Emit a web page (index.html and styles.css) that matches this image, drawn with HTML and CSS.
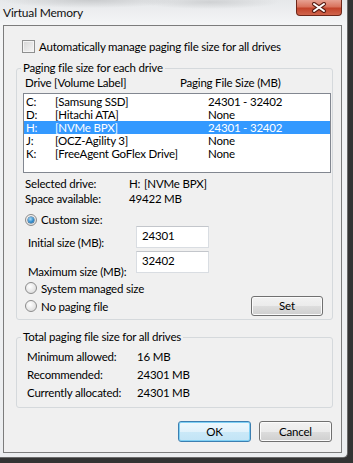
FILE: index.html
```html
<html>
<head>
<link rel="stylesheet" href="styles.css">
</head>
<body>
<div class="window">
  <div class="titlebar">
    <span class="title">Virtual Memory</span>
    <div class="close">
      <svg width="16" height="11" viewBox="0 0 16 11">
        <path d="M3 2 L13 9 M13 2 L3 9" stroke="#5a1e14" stroke-width="4" stroke-linecap="round"/>
        <path d="M3 2 L13 9 M13 2 L3 9" stroke="#ffffff" stroke-width="2" stroke-linecap="round"/>
      </svg>
    </div>
  </div>

  <div class="client">
    <div class="check-row"><span class="checkbox"></span>Automatically manage paging file size for all drives</div>

    <fieldset class="group group-drives">
      <legend>Paging file size for each drive</legend>
      <div class="list-head">
        <span class="h-drive">Drive</span>
        <span class="h-label">[Volume Label]</span>
        <span>Paging File Size (MB)</span>
      </div>
      <div class="listbox">
        <div class="row"><span class="r-drive">C:</span><span class="r-label">[Samsung SSD]</span><span>24301 - 32402</span></div>
        <div class="row"><span class="r-drive">D:</span><span class="r-label">[Hitachi ATA]</span><span>None</span></div>
        <div class="row sel"><span class="r-drive">H:</span><span class="r-label">[NVMe BPX]</span><span>24301 - 32402</span></div>
        <div class="row"><span class="r-drive">J:</span><span class="r-label">[OCZ-Agility 3]</span><span>None</span></div>
        <div class="row"><span class="r-drive">K:</span><span class="r-label">[FreeAgent GoFlex Drive]</span><span>None</span></div>
      </div>

      <div class="info first"><span class="info-key">Selected drive:</span><span class="drv">H:</span><span>[NVMe BPX]</span></div>
      <div class="info"><span class="info-key">Space available:</span><span>49422 MB</span></div>

      <div class="radio-row custom"><span class="radio on"><span class="dot"></span></span>Custom size:</div>
      <div class="size-row initial">
        <span class="size-label">Initial size (MB):</span>
        <div class="size-input">24301</div>
      </div>
      <div class="size-row maximum">
        <span class="size-label">Maximum size (MB):</span>
        <div class="size-input">32402</div>
      </div>
      <div class="radio-row system"><span class="radio"></span>System managed size</div>
      <div class="radio-row nopaging">
        <span class="radio-label"><span class="radio"></span>No paging file</span>
        <div class="btn set">Set</div>
      </div>
    </fieldset>

    <fieldset class="group group-total">
      <legend>Total paging file size for all drives</legend>
      <div class="total"><span class="total-key">Minimum allowed:</span><span>16 MB</span></div>
      <div class="total"><span class="total-key">Recommended:</span><span>24301 MB</span></div>
      <div class="total"><span class="total-key">Currently allocated:</span><span>24301 MB</span></div>
    </fieldset>

    <div class="buttons">
      <div class="btn default">OK</div>
      <div class="btn">Cancel</div>
    </div>
  </div>
</div>
</body>
</html>
```

FILE: styles.css
```css
body
{
  margin:0;
  padding:0;
  background:#333333;
  font-family:"Lato", "Liberation Sans", sans-serif;
  font-size:11.5px;
  letter-spacing:-0.2px;
  color:#000;
  overflow:hidden;
}
.window
{
  width:348px;
  height:458px;
  box-sizing:border-box;
  padding:0 5px 0 3px;
  background:
    radial-gradient(ellipse 90px 8px at 90px 0px, #c9cbcd, transparent),
    radial-gradient(ellipse 70px 7px at 210px 2px, #cfd1d3, transparent),
    linear-gradient(#e6e8ea, #f4f5f6 24px, #eceef0);
  border-bottom-right-radius:5px;
  border-right:1px solid #6c6c6c;
  border-bottom:1px solid #6c6c6c;
}
.titlebar
{
  height:25px;
  display:flex;
  justify-content:space-between;
  align-items:flex-start;
}
.title
{
  line-height:26px;
  font-size:12px;
  color:#111;
}
.close
{
  width:46px;
  height:16px;
  box-sizing:border-box;
  border:1px solid #6e2618;
  border-top:none;
  border-radius:0 0 4px 4px;
  background:linear-gradient(#e7a192, #d9735d 45%, #c3432a 55%, #d0654d);
  display:flex;
  align-items:center;
  justify-content:center;
}
.client
{
  height:428px;
  box-sizing:border-box;
  border:1px solid #7c7c7c;
  background:#f0f0f0;
  padding-top:14px;
}
.check-row
{
  display:flex;
  align-items:center;
  gap:4px;
  height:13px;
  margin-left:18px;
}
.checkbox
{
  width:13px;
  height:13px;
  box-sizing:border-box;
  border:1px solid #8e8f8f;
  background:linear-gradient(135deg, #d6d6d6, #f6f6f6);
  box-shadow:inset 0 0 0 1px #f4f4f4;
}
.group
{
  margin:8px 0 0 12px;
  width:317px;
  min-width:0;
  box-sizing:border-box;
  border:1px solid #d5d9dc;
  border-radius:3px;
  padding:0 0 3px 0;
}
.group legend
{
  margin-left:4px;
  padding:0 2px;
  line-height:14px;
}
.list-head
{
  display:flex;
  height:14px;
  line-height:14px;
  margin-top:1px;
  padding-left:8px;
}
.h-drive { width:29px; flex-shrink:0; }
.h-label { width:126px; }
.listbox
{
  margin:3px 0 0 6px;
  width:308px;
  height:80px;
  box-sizing:border-box;
  border:1px solid #828790;
  background:#fff;
  padding-top:1px;
}
.row
{
  display:flex;
  height:13px;
  line-height:13px;
  padding-left:2px;
}
.row.sel
{
  background:#3399ff;
  color:#fff;
}
.r-drive { width:29px; }
.r-label { width:153px; }
.info
{
  display:flex;
  height:15px;
  line-height:15px;
  padding-left:8px;
}
.info.first { margin-top:3px; }
.info-key { width:104px; }
.drv { width:15px; }
.radio-row
{
  display:flex;
  align-items:center;
  gap:4px;
  height:13px;
  padding-left:8px;
}
.radio-row.custom { margin-top:7px; }
.radio-row.system { margin-top:2px; height:14px; }
.radio-row.nopaging
{
  margin-top:1px;
  height:20px;
  justify-content:space-between;
  padding-right:9px;
}
.radio-label
{
  display:flex;
  align-items:center;
  gap:4px;
}
.radio
{
  width:12px;
  height:12px;
  box-sizing:border-box;
  border-radius:50%;
  border:1px solid #8c8c8c;
  background:radial-gradient(circle at 40% 35%, #ffffff, #d4d4d4);
  display:flex;
  align-items:center;
  justify-content:center;
}
.radio .dot
{
  width:6px;
  height:6px;
  border-radius:50%;
  background:radial-gradient(circle at 40% 35%, #a9dcf8, #2a86c9 60%, #1a5f96);
  box-shadow:0 0 0 0.5px #1c4f7a;
}
.size-row
{
  display:flex;
  align-items:flex-start;
  padding-left:11px;
}
.size-row.maximum { margin-top:1px; }
.size-label
{
  width:108px;
  line-height:14px;
}
.initial .size-label { margin-top:10px; }
.maximum .size-label { margin-top:14px; }
.size-input
{
  width:73px;
  height:22px;
  box-sizing:border-box;
  border:1px solid #d9dde2;
  border-top-color:#c3c6cb;
  background:#fff;
  padding-left:5px;
  line-height:18px;
}
.btn
{
  width:73px;
  height:21px;
  box-sizing:border-box;
  border:1px solid #707070;
  border-radius:3px;
  background:linear-gradient(#f2f2f2, #ebebeb 50%, #dddddd 50%, #cfcfcf);
  box-shadow:inset 0 0 0 1px #fbfbfb;
  text-align:center;
  line-height:19px;
}
.btn.set
{
  width:72px;
  height:20px;
  line-height:18px;
}
.btn.default
{
  border-color:#3c7fb1;
  background:linear-gradient(#eef8fd, #e1f2fb 50%, #cbe9f8 50%, #c2e4f6);
  box-shadow:inset 0 0 0 1px #7fd0f4;
}
.total
{
  display:flex;
  height:18px;
  line-height:18px;
  padding-left:10px;
}
.group-total
{
  margin-top:10px;
  padding:4px 0 5px 0;
}
.total-key { width:110px; }
.buttons
{
  display:flex;
  justify-content:flex-end;
  gap:8px;
  margin-top:13px;
  padding-right:9px;
}
```
